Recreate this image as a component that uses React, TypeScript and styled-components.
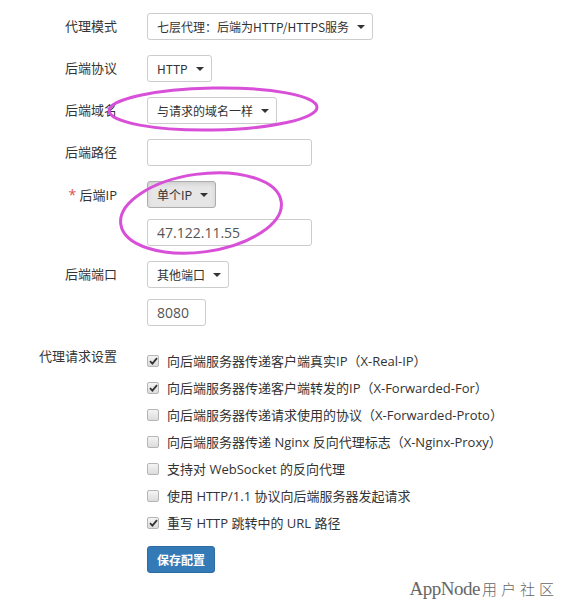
import React from 'react';
import styled, { createGlobalStyle } from 'styled-components';

const GlobalStyle = createGlobalStyle`
  body {
    margin: 0;
    background: #fff;
    font-family: "Open Sans", "Noto Sans CJK SC", sans-serif;
    color: #333;
  }
`;

const selectRows = [
  { label: '代理模式', value: '七层代理：后端为HTTP/HTTPS服务' },
  { label: '后端协议', value: 'HTTP' },
  { label: '后端域名', value: '与请求的域名一样' },
];

const options = [
  { text: '向后端服务器传递客户端真实IP（X-Real-IP）', checked: true },
  { text: '向后端服务器传递客户端转发的IP（X-Forwarded-For）', checked: true },
  { text: '向后端服务器传递请求使用的协议（X-Forwarded-Proto）', checked: false },
  { text: '向后端服务器传递 Nginx 反向代理标志（X-Nginx-Proxy）', checked: false },
  { text: '支持对 WebSocket 的反向代理', checked: false },
  { text: '使用 HTTP/1.1 协议向后端服务器发起请求', checked: false },
  { text: '重写 HTTP 跳转中的 URL 路径', checked: true },
];

const Select: React.FC<{ value: string; active?: boolean }> = ({ value, active }) => (
  <SelectButton $active={active}>
    {value}
    <Caret />
  </SelectButton>
);

const App: React.FC = () => {
  return (
    <Page>
      <GlobalStyle />
      {selectRows.map((row) => (
        <FormRow key={row.label}>
          <Label>{row.label}</Label>
          <Controls>
            <Select value={row.value} />
          </Controls>
        </FormRow>
      ))}
      <FormRow>
        <Label>后端路径</Label>
        <Controls>
          <TextInput $width={165} />
        </Controls>
      </FormRow>
      <FormRow>
        <Label>
          <Required>*</Required> 后端IP
        </Label>
        <Controls>
          <Select value="单个IP" active />
          <TextInput $width={165} defaultValue="47.122.11.55" />
        </Controls>
      </FormRow>
      <FormRow>
        <Label>后端端口</Label>
        <Controls>
          <Select value="其他端口" />
          <TextInput $width={59} defaultValue="8080" />
        </Controls>
      </FormRow>
      <OptionsRow>
        <OptionsLabel>代理请求设置</OptionsLabel>
        <Controls $gap={0}>
          {options.map((opt) => (
            <CheckItem key={opt.text}>
              <CheckBox>
                {opt.checked && (
                  <svg width="9" height="8" viewBox="0 0 9 8">
                    <path d="M1 4.2 L3.4 6.6 L8 1.2" fill="none" stroke="#333" strokeWidth="1.8" />
                  </svg>
                )}
              </CheckBox>
              {opt.text}
            </CheckItem>
          ))}
          <SaveButton>保存配置</SaveButton>
        </Controls>
      </OptionsRow>

      <Annotations width="561" height="603" viewBox="0 0 561 603">
        <ellipse cx="213" cy="109" rx="104" ry="21" transform="rotate(-1 213 109)" />
        <ellipse cx="201" cy="213" rx="81" ry="39" transform="rotate(-8 201 213)" />
      </Annotations>
      <Watermark>
        AppNode<WatermarkCjk>用户社区</WatermarkCjk>
      </Watermark>
    </Page>
  );
};

const Page = styled.div`
  position: relative;
  width: 561px;
  height: 603px;
  padding-top: 13px;
  box-sizing: border-box;
  overflow: hidden;
`;

const FormRow = styled.div`
  display: grid;
  grid-template-columns: 117px auto;
  column-gap: 30px;
  align-items: start;
  margin-bottom: 15px;
`;

const OptionsRow = styled(FormRow)`
  margin-top: 21px;
`;

const Label = styled.div`
  text-align: right;
  font-size: 13px;
  line-height: 27px;
  color: #333;
  white-space: nowrap;
`;

const OptionsLabel = styled(Label)`
  line-height: 18px;
`;

const Required = styled.span`
  color: #d9534f;
  font-size: 14px;
`;

const Controls = styled.div<{ $gap?: number }>`
  display: flex;
  flex-direction: column;
  align-items: flex-start;
  gap: ${(p) => (p.$gap ?? 11)}px;
`;

const SelectButton = styled.div<{ $active?: boolean }>`
  display: inline-flex;
  align-items: center;
  gap: 8px;
  height: 27px;
  box-sizing: border-box;
  padding: 0 7px 0 9px;
  border: 1px solid ${(p) => (p.$active ? '#adadad' : '#ccc')};
  border-radius: 3px;
  background: ${(p) => (p.$active ? '#e6e6e6' : '#fff')};
  box-shadow: ${(p) => (p.$active ? 'inset 0 2px 4px rgba(0,0,0,0.1)' : 'none')};
  font-family: "Noto Sans CJK SC", sans-serif;
  font-size: 12px;
  color: #333;
  white-space: nowrap;
`;

const Caret = styled.span`
  width: 0;
  height: 0;
  border-left: 4px solid transparent;
  border-right: 4px solid transparent;
  border-top: 4px solid #333;
  margin-top: 1px;
`;

const TextInput = styled.input<{ $width: number }>`
  width: ${(p) => p.$width}px;
  height: 27px;
  box-sizing: border-box;
  padding: 0 9px;
  border: 1px solid #ccc;
  border-radius: 3px;
  font-family: "Open Sans", sans-serif;
  font-size: 14px;
  color: #555;
  outline: none;
`;

const CheckItem = styled.label`
  display: flex;
  align-items: center;
  height: 27px;
  gap: 8px;
  font-size: 13px;
  color: #333;
  white-space: nowrap;
`;

const CheckBox = styled.span`
  display: inline-flex;
  align-items: center;
  justify-content: center;
  width: 12px;
  height: 12px;
  box-sizing: border-box;
  border: 1px solid #b5b5b5;
  border-radius: 2px;
  background: linear-gradient(#f4f4f4, #dcdcdc);
`;

const SaveButton = styled.button`
  margin-top: 10px;
  height: 27px;
  padding: 0 9px;
  border: 1px solid #2e6da4;
  border-radius: 3px;
  background: #337ab7;
  color: #fff;
  font-family: "Noto Sans CJK SC", sans-serif;
  font-size: 12px;
  font-weight: 700;
`;

const Annotations = styled.svg`
  position: absolute;
  left: 0;
  top: 0;
  pointer-events: none;
  fill: none;
  stroke: #d84fd8;
  stroke-width: 3;
`;

const Watermark = styled.div`
  position: absolute;
  right: 3px;
  top: 578px;
  font-family: "Liberation Serif", serif;
  font-size: 19px;
  color: #666;
  letter-spacing: -0.5px;
`;

const WatermarkCjk = styled.span`
  font-family: "Noto Sans CJK SC", serif;
  font-size: 15px;
  font-weight: 300;
  letter-spacing: 4px;
  margin-left: 2px;
`;

export default App;
